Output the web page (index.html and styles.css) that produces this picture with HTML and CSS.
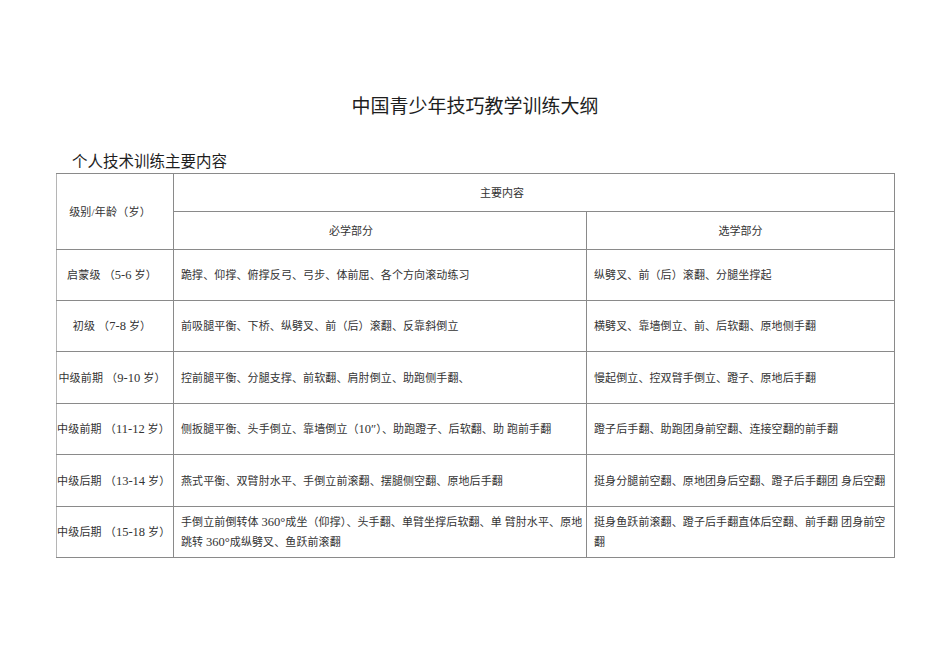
FILE: index.html
```html
<!DOCTYPE html>
<html lang="zh-CN">
<head>
<meta charset="utf-8">
<title>中国青少年技巧教学训练大纲</title>
<link rel="stylesheet" href="styles.css">
</head>
<body>
<div class="page">
  <h1 class="title">中国青少年技巧教学训练大纲</h1>
  <h2 class="subtitle">个人技术训练主要内容</h2>
  <table class="outline">
    <colgroup>
      <col class="c1">
      <col class="c2">
      <col class="c3">
    </colgroup>
    <tr class="hrow">
      <td class="level head-level" rowspan="2">级别/年龄（岁）</td>
      <td class="head head-main" colspan="2">主要内容</td>
    </tr>
    <tr class="hrow">
      <td class="head head-must">必学部分</td>
      <td class="head">选学部分</td>
    </tr>
    <tr class="row r51">
      <td class="level">启蒙级 （<span class="num">5-6</span> 岁）</td>
      <td class="txt">跪撑、仰撑、俯撑反弓、弓步、体前屈、各个方向滚动练习</td>
      <td class="txt">纵劈叉、前（后）滚翻、分腿坐撑起</td>
    </tr>
    <tr class="row r51">
      <td class="level">初级 （<span class="num">7-8</span> 岁）</td>
      <td class="txt">前吸腿平衡、下桥、纵劈叉、前（后）滚翻、反靠斜倒立</td>
      <td class="txt">横劈叉、靠墙倒立、前、后软翻、原地侧手翻</td>
    </tr>
    <tr class="row r52">
      <td class="level">中级前期 （<span class="num">9-10</span> 岁）</td>
      <td class="txt">控前腿平衡、分腿支撑、前软翻、肩肘倒立、助跑侧手翻、</td>
      <td class="txt">慢起倒立、控双臂手倒立、蹬子、原地后手翻</td>
    </tr>
    <tr class="row r51">
      <td class="level">中级前期 （<span class="num">11-12</span> 岁）</td>
      <td class="txt">侧扳腿平衡、头手倒立、靠墙倒立（<span class="num">10″</span>）、助跑蹬子、后软翻、助 跑前手翻</td>
      <td class="txt">蹬子后手翻、助跑团身前空翻、连接空翻的前手翻</td>
    </tr>
    <tr class="row r52">
      <td class="level">中级后期 （<span class="num">13-14</span> 岁）</td>
      <td class="txt">燕式平衡、双臂肘水平、手倒立前滚翻、摆腿侧空翻、原地后手翻</td>
      <td class="txt">挺身分腿前空翻、原地团身后空翻、蹬子后手翻团 身后空翻</td>
    </tr>
    <tr class="row r51">
      <td class="level">中级后期 （<span class="num">15-18</span> 岁）</td>
      <td class="txt two">手倒立前倒转体 <span class="num">360°</span>成坐（仰撑）、头手翻、单臂坐撑后软翻、单 臂肘水平、原地<br>跳转 <span class="num">360°</span>成纵劈叉、鱼跃前滚翻</td>
      <td class="txt two">挺身鱼跃前滚翻、蹬子后手翻直体后空翻、前手翻 团身前空<br>翻</td>
    </tr>
  </table>
</div>
</body>
</html>
```

FILE: styles.css
```css
html, body {
  margin: 0;
  padding: 0;
  background: #ffffff;
}

body {
  font-family: "Liberation Serif", "Noto Sans CJK SC", serif;
  color: #222222;
}

.page {
  width: 950px;
  padding-top: 95px;
}

.title {
  margin: 0;
  font-size: 19px;
  line-height: 24px;
  font-weight: normal;
  text-align: center;
  color: #1e1e1e;
}

.subtitle {
  margin: 33px 0 0 0;
  padding-left: 72px;
  font-size: 15.5px;
  line-height: 20px;
  font-weight: normal;
  color: #1e1e1e;
}

.outline {
  margin: 1px 0 0 56px;
  border-collapse: collapse;
  table-layout: fixed;
  width: 838px;
  font-size: 11px;
  color: #333333;
}

.c1 { width: 117px; }
.c2 { width: 413px; }
.c3 { width: 308px; }

.outline td {
  border: 1px solid #8a8a8a;
  padding: 0;
  vertical-align: middle;
  line-height: 20px;
}

.outline tr td:first-child {
  border-left-color: #b5b5b5;
}

.hrow { height: 38px; }
.r51 { height: 51px; }
.r52 { height: 52px; }

.outline .head {
  text-align: center;
}

.outline .head-main {
  padding-right: 64px;
}

.outline .head-must {
  padding-right: 58px;
}

.outline .level {
  text-align: center;
  padding-right: 6px;
  white-space: nowrap;
  letter-spacing: 0.2px;
}

.outline .head-level {
  padding-left: 6px;
  padding-right: 16px;
}

.outline .txt {
  padding-left: 7px;
  white-space: nowrap;
  letter-spacing: 0.1px;
}

.outline .level,
.outline .txt {
  font-size: 11px;
}

.num {
  font-size: 12.5px;
  letter-spacing: 0;
}
```
